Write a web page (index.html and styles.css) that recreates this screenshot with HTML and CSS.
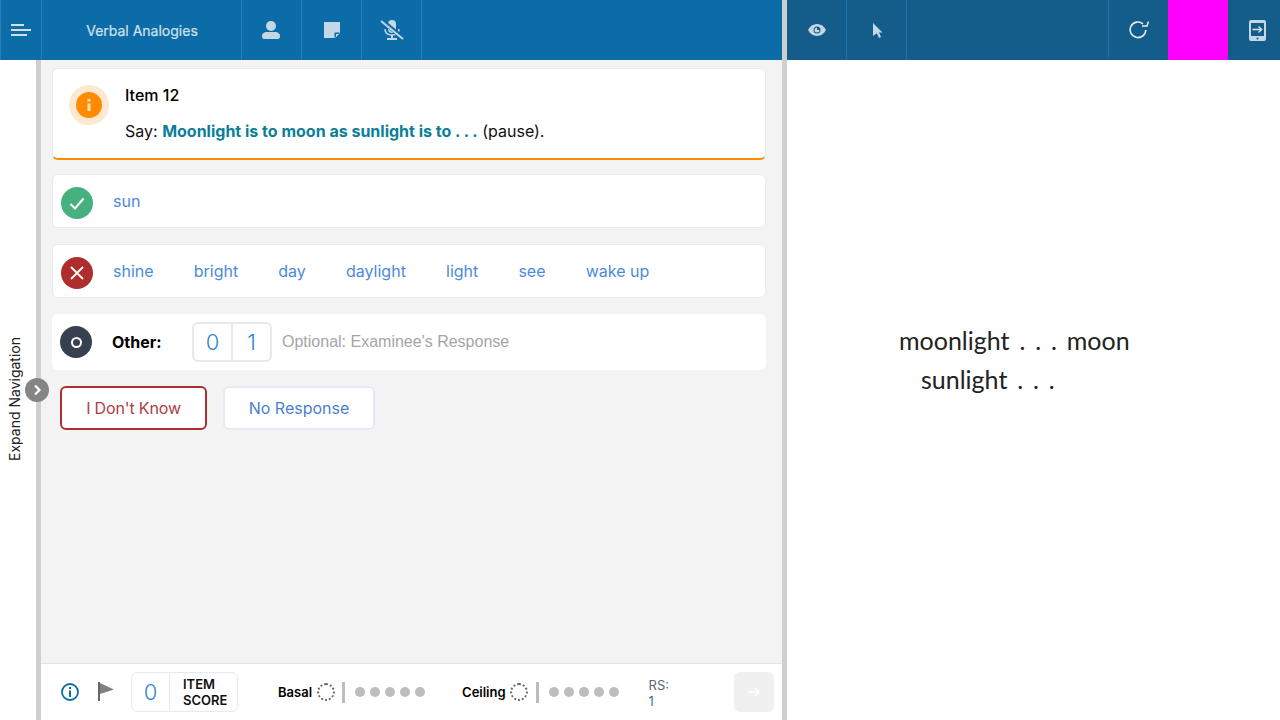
FILE: index.html
```html
<!DOCTYPE html>
<html lang="en">
<head>
<meta charset="UTF-8" />
<title>Verbal Analogies</title>
<link rel="stylesheet" href="styles.css">
</head>
<body>
<div class="app">
  <section class="left">
    <header class="topbar">
      <div class="cell menu-cell">
        <svg width="20" height="12" viewBox="0 0 20 12"><path d="M0 0h13v2H0zM0 5h20v2H0zM0 10h16v2H0z" fill="#d3dfe9"/></svg>
      </div>
      <div class="cell title-cell">Verbal Analogies</div>
      <div class="cell icon-cell">
        <svg class="person-icon" width="18" height="18" viewBox="0 0 18 18"><circle cx="9" cy="5" r="5" fill="#c5d6e4"/><path d="M0 15c0-3 3-4 4.500-4h9c1.500 0 4.500 1 4.500 4 0 1.700-.8 3-2 3H2c-1.200 0-2-1.300-2-3z" fill="#c5d6e4"/></svg>
      </div>
      <div class="cell icon-cell">
        <svg width="16" height="16" viewBox="0 0 16 16"><path d="M0 0h16v11l-5 5H0z" fill="#c5d6e4"/><path d="M10.500 10.500H16l-5.500 5.500z" fill="#0b6ca8"/><path d="M12 12h3l-3 3z" fill="#c5d6e4"/></svg>
      </div>
      <div class="cell icon-cell">
        <svg width="24" height="20" viewBox="0 0 24 20"><rect x="8" y="0" width="8" height="13" rx="4" fill="#c5d6e4"/><path d="M5 9c0 4 3 6 7 6s7-2 7-6" fill="none" stroke="#c5d6e4" stroke-width="1.500"/><path d="M11 15h2v3h4v2H7v-2h4z" fill="#c5d6e4"/><path d="M1 0l22 18" stroke="#0b6ca8" stroke-width="4.500"/><path d="M1 1l22 18" stroke="#c5d6e4" stroke-width="2"/></svg>
      </div>
    </header>
    <div class="left-body">
      <aside class="rail">
        <span class="rail-label">Expand Navigation</span>
        <span class="expand-btn">
          <svg width="10" height="12" viewBox="0 0 10 12"><path d="M3 1.500L7.500 6 3 10.500" fill="none" stroke="#fff" stroke-width="2.200"/></svg>
        </span>
      </aside>
      <main class="main">
        <div class="content">
          <div class="card item-card">
            <div class="item-halo"><span class="item-icon">
              <svg width="4" height="12" viewBox="0 0 4 12"><path d="M.5 0h3v2.500h-3zM.5 4.500h3V12h-3z" fill="#ffe3bf"/></svg>
            </span></div>
            <div class="item-text">
              <div class="item-title">Item 12</div>
              <div class="item-say">Say: <b>Moonlight is to moon as sunlight is to . . .</b> (pause).</div>
            </div>
          </div>

          <div class="card answer-card">
            <span class="badge badge-ok">
              <svg width="16" height="13" viewBox="0 0 16 13"><path d="M1.500 7l4.500 4.500L14.500 1.500" fill="none" stroke="#fff" stroke-width="2"/></svg>
            </span>
            <span class="answer">sun</span>
          </div>

          <div class="card answer-card">
            <span class="badge badge-bad">
              <svg width="14" height="14" viewBox="0 0 14 14"><path d="M1 1l12 12M13 1L1 13" stroke="#fff" stroke-width="1.800"/></svg>
            </span>
            <span class="answer">shine</span>
            <span class="answer">bright</span>
            <span class="answer">day</span>
            <span class="answer">daylight</span>
            <span class="answer">light</span>
            <span class="answer">see</span>
            <span class="answer">wake up</span>
          </div>

          <div class="other-card">
            <span class="badge badge-other"><span class="other-ring"></span></span>
            <span class="other-label">Other:</span>
            <div class="score-toggle">
              <span class="score-btn">0</span>
              <span class="score-btn">1</span>
            </div>
            <span class="other-hint">Optional: Examinee's Response</span>
          </div>

          <div class="response-row">
            <button class="resp-btn resp-dk">I Don't Know</button>
            <button class="resp-btn resp-nr">No Response</button>
          </div>
        </div>

        <footer class="footer">
          <svg class="foot-info" width="18" height="18" viewBox="0 0 18 18"><circle cx="9" cy="9" r="8" fill="none" stroke="#0b6ca8" stroke-width="1.800"/><path d="M8 4h2v2H8zM8 7.500h2V14H8z" fill="#0b6ca8"/></svg>
          <svg class="foot-flag" width="16" height="20" viewBox="0 0 16 20"><path d="M0 0h2v19H0z" fill="#666"/><path d="M2 1l14 6.500L2 12z" fill="#808080"/></svg>
          <div class="item-score">
            <span class="item-score-val">0</span>
            <span class="item-score-label">ITEM<br>SCORE</span>
          </div>
          <div class="tally tally-basal">
            <b>Basal</b>
            <span class="dash-circle"></span>
            <span class="tally-bar"></span>
            <span class="dots"><i></i><i></i><i></i><i></i><i></i></span>
          </div>
          <div class="tally tally-ceiling">
            <b>Ceiling</b>
            <span class="dash-circle"></span>
            <span class="tally-bar"></span>
            <span class="dots"><i></i><i></i><i></i><i></i><i></i></span>
          </div>
          <div class="rs"><span>RS:</span><span class="rs-val">1</span></div>
          <button class="next-btn">
            <svg width="14" height="12" viewBox="0 0 14 12"><path d="M1 6h11M7.500 1.500L12 6l-4.500 4.500" fill="none" stroke="#fff" stroke-width="1.500"/></svg>
          </button>
        </footer>
      </main>
    </div>
  </section>

  <div class="divider"></div>

  <section class="right">
    <header class="topbar topbar-dark">
      <div class="cell icon-cell">
        <svg width="18" height="12" viewBox="0 0 18 12"><path d="M0 6c2-3.700 5.200-6 9-6s7 2.300 9 6c-2 3.700-5.200 6-9 6S2 9.700 0 6z" fill="#c5d6e4"/><circle cx="9" cy="6" r="3.500" fill="#145c8a"/><path d="M9 3.500V6h2.500A2.500 2.500 0 1 1 9 3.500z" fill="#c5d6e4"/></svg>
      </div>
      <div class="cell icon-cell">
        <svg class="cursor-icon" width="10" height="15" viewBox="0 0 10 15"><path d="M0 0l9.500 9.500H6l2 4.500-2 1-2.200-4.700L0 13z" fill="#c5d6e4"/></svg>
      </div>
      <div class="bar-gap"></div>
      <div class="cell icon-cell refresh-cell">
        <svg width="20" height="18" viewBox="0 0 20 18"><path d="M14 2.800A7.800 7.800 0 1 0 16.800 9" fill="none" stroke="#e3ecf2" stroke-width="1.600"/><path d="M13 5h5l1.500-4.500" fill="none" stroke="#e3ecf2" stroke-width="1.500"/></svg>
      </div>
      <div class="magenta"></div>
      <div class="exit-cell">
        <svg width="17" height="21" viewBox="0 0 17 21"><rect x="0" y="0" width="17" height="21" rx="2" fill="#c5d6e4"/><rect x="2" y="3" width="13" height="13" fill="#145c8a"/><path d="M3.500 9.500h9M9.500 6.500l3.200 3-3.200 3" fill="none" stroke="#dbe6ee" stroke-width="1.300"/><circle cx="8.500" cy="18.500" r="1" fill="#145c8a"/></svg>
      </div>
    </header>
    <div class="stimulus">
      <div class="stim-line">moonlight . . . moon</div>
      <div class="stim-line stim-second">sunlight . . .</div>
    </div>
  </section>
</div>
</body>
</html>
```

FILE: styles.css
```css
html, body {
  margin: 0;
  padding: 0;
  height: 100%;
  overflow: hidden;
  background-color: white;
  font-family: 'Inter', 'Liberation Sans', sans-serif;
}

.app {
  display: flex;
  width: 1280px;
  height: 720px;
}

.left {
  width: 782px;
  display: flex;
  flex-direction: column;
}

.divider {
  width: 5px;
  background-color: #cfcfcf;
}

.right {
  flex: 1;
  display: flex;
  flex-direction: column;
}

/* top bars */
.topbar {
  height: 60px;
  flex: none;
  display: flex;
  background-color: #0b6ca8;
  color: #d3e0ea;
}

.topbar-dark {
  background-color: #145c8a;
}

.cell {
  display: flex;
  align-items: center;
  justify-content: center;
  box-sizing: border-box;
  border-right: 1px solid #2a7eb3;
}

.topbar-dark .cell {
  border-right-color: #1d76ae;
}

.menu-cell {
  width: 42px;
  border-left: 1px solid #2a7eb3;
}

.title-cell {
  width: 200px;
  padding-left: 1px;
  font-size: 14px;
  font-weight: 400;
  -webkit-text-stroke: 0.2px #d3e0ea;
}

.icon-cell {
  width: 60px;
}

.person-icon {
  margin-right: 1px;
}

.cursor-icon {
  margin-left: 2px;
}

.bar-gap {
  width: 201px;
  border-right: 1px solid #1d76ae;
  margin-bottom: 3px;
}

.topbar-dark .refresh-cell {
  border-right: none;
  width: 59px;
}

.magenta {
  width: 60px;
  background-color: #ff00ff;
}

.exit-cell {
  flex: 1;
  display: flex;
  align-items: center;
  justify-content: center;
  padding-left: 7px;
}

/* left side */
.left-body {
  flex: 1;
  display: flex;
  min-height: 0;
}

.rail {
  position: relative;
  width: 36px;
  flex: none;
  box-sizing: content-box;
  border-right: 5px solid #cfcfcf;
  background-color: white;
}

.rail-label {
  position: absolute;
  left: 6px;
  top: 277px;
  writing-mode: vertical-rl;
  transform: rotate(180deg);
  font-size: 14px;
  line-height: 17px;
  color: #222;
}

.expand-btn {
  position: absolute;
  left: 25px;
  top: 318px;
  width: 24px;
  height: 24px;
  border-radius: 50%;
  background-color: #858585;
  display: flex;
  align-items: center;
  justify-content: center;
}

.main {
  flex: 1;
  display: flex;
  flex-direction: column;
  background-color: #f3f3f4;
  min-width: 0;
}

.content {
  flex: 1;
  padding: 8px 16px 0 11px;
}

.card {
  box-sizing: border-box;
  background-color: white;
  border: 1px solid #e6e9f2;
  border-radius: 6px;
  display: flex;
  align-items: center;
}

.item-card {
  height: 92px;
  margin-bottom: 14px;
  padding: 0 16px;
  border-bottom: 2px solid #ff8c00;
  align-items: flex-start;
}

.item-halo {
  margin-top: 16px;
  width: 40px;
  height: 40px;
  border-radius: 50%;
  background-color: #ffe8d0;
  display: flex;
  align-items: center;
  justify-content: center;
}

.item-icon {
  width: 26px;
  height: 26px;
  border-radius: 50%;
  background-color: #ff8c00;
  display: flex;
  align-items: center;
  justify-content: center;
}

.item-text {
  margin-left: 16px;
  padding-top: 16px;
  font-size: 16px;
  color: #111;
}

.item-title {
  font-weight: 500;
  line-height: 20px;
  color: #000;
}

.item-say {
  margin-top: 16px;
  line-height: 20px;
}

.item-say b {
  color: #0b7f98;
  font-weight: 700;
}

.answer-card {
  height: 54px;
  margin-bottom: 16px;
  padding-left: 8px;
}

.badge {
  width: 32px;
  height: 32px;
  flex: none;
  border-radius: 50%;
  display: flex;
  align-items: center;
  justify-content: center;
}

.badge-ok {
  background-color: #47b07f;
  margin: 4px 20px 0 0;
}

.badge-bad {
  background-color: #ae2e2e;
  margin: 4px 20px 0 0;
}

.badge-other {
  background-color: #36404f;
}

.other-ring {
  width: 7px;
  height: 7px;
  border: 2px solid white;
  border-radius: 50%;
}

.answer {
  font-size: 16px;
  color: #4a8bdc;
  margin-right: 40.15px;
}

.other-card {
  height: 56px;
  box-sizing: border-box;
  background-color: white;
  border-radius: 6px;
  display: flex;
  align-items: center;
  padding-left: 8px;
  margin-bottom: 16px;
}

.other-label {
  margin-left: 20px;
  width: 80px;
  font-size: 16px;
  font-weight: 700;
  color: #000;
}

.score-toggle {
  display: flex;
  box-sizing: border-box;
  height: 40px;
  border: 2px solid #e8e9ea;
  border-radius: 6px;
}

.score-btn {
  width: 37px;
  display: flex;
  align-items: center;
  justify-content: center;
  font-size: 22px;
  font-weight: 300;
  color: #2f86d6;
}

.score-btn + .score-btn {
  border-left: 2px solid #e8e9ea;
}

.other-hint {
  margin-left: 10px;
  font-size: 16px;
  font-family: 'Liberation Sans', sans-serif;
  color: #a5a5a5;
}

.response-row {
  display: flex;
  gap: 16px;
  padding-left: 8px;
}

.resp-btn {
  height: 44px;
  box-sizing: border-box;
  border-radius: 6px;
  background-color: white;
  font-family: 'Inter', sans-serif;
  font-size: 16px;
  padding: 0;
}

.resp-dk {
  width: 147px;
  border: 2px solid #ae2e2e;
  color: #ae3e3e;
  letter-spacing: -0.15px;
}

.resp-nr {
  width: 152px;
  border: 2px solid #e6e9f5;
  color: #4a7fd0;
}

/* footer */
.footer {
  height: 57px;
  flex: none;
  box-sizing: border-box;
  background-color: white;
  border-top: 1px solid #e2e2e2;
  display: flex;
  align-items: center;
  padding-left: 20px;
}

.foot-info {
  flex: none;
}

.foot-flag {
  flex: none;
  margin-left: 19px;
}

.item-score {
  margin-left: 17px;
  width: 107px;
  height: 40px;
  box-sizing: border-box;
  border: 1px solid #e6e9f2;
  border-radius: 6px;
  display: flex;
  align-items: center;
  flex: none;
}

.item-score-val {
  width: 37px;
  height: 100%;
  display: flex;
  align-items: center;
  justify-content: center;
  border-right: 1px solid #e6e9f2;
  font-size: 22px;
  font-weight: 300;
  color: #2f86d6;
}

.item-score-label {
  margin-left: 13px;
  font-size: 13px;
  font-weight: 600;
  line-height: 16px;
  color: #111;
}

.tally {
  display: flex;
  align-items: center;
  flex: none;
}

.tally b {
  font-size: 13px;
  font-weight: 600;
  color: #000;
}

.tally-basal {
  margin-left: 40px;
}

.tally-basal .dash-circle {
  margin-left: 5px;
}

.tally-ceiling {
  margin-left: 37px;
}

.tally-ceiling .tally-bar {
  margin-left: 8px;
}

.dash-circle {
  box-sizing: border-box;
  width: 18px;
  height: 18px;
  margin-left: 4px;
  border: 2px dotted #666;
  border-radius: 50%;
}

.tally-bar {
  width: 3px;
  height: 21px;
  margin-left: 7px;
  background-color: #bdbdbd;
}

.dots {
  display: flex;
  gap: 5px;
  margin-left: 10px;
}

.dots i {
  width: 10px;
  height: 10px;
  border-radius: 50%;
  background-color: #bdbdbd;
}

.rs {
  margin-left: 30px;
  margin-top: 2px;
  width: 85px;
  display: flex;
  flex-direction: column;
  font-size: 13px;
  line-height: 16px;
  color: #5b6774;
}

.rs-val {
  color: #3f7397;
}

.next-btn {
  width: 40px;
  height: 40px;
  border: none;
  padding: 0;
  border-radius: 6px;
  background-color: #f0f0f0;
  display: flex;
  align-items: center;
  justify-content: center;
  flex: none;
}

/* right side */
.stimulus {
  flex: 1;
  padding: 261px 0 0 112px;
  font-family: 'Lato', sans-serif;
  font-size: 25px;
  line-height: 39px;
  word-spacing: 3.5px;
  color: #222;
}

.stim-second {
  padding-left: 22px;
}
```
